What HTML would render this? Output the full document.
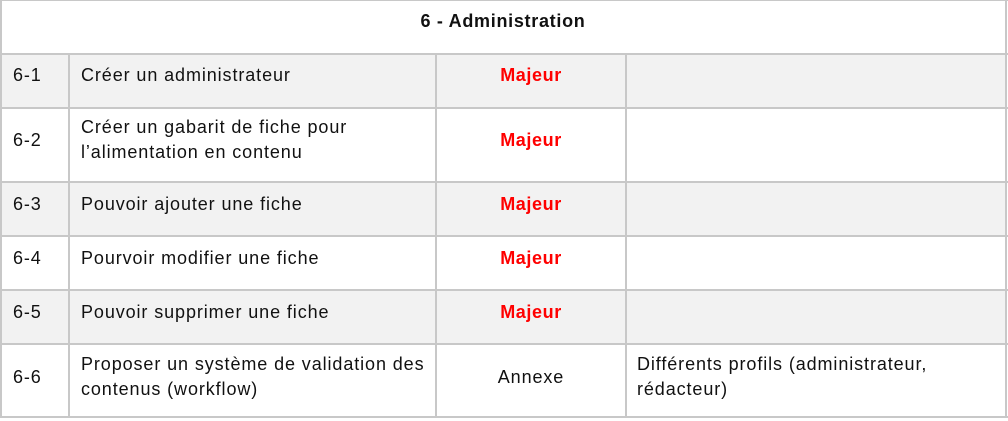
<!DOCTYPE html><html><head><style>
body{margin:0;width:1008px;height:421px;background:#fff;position:relative;font-family:"Liberation Sans",sans-serif;font-size:18px;letter-spacing:0.9px;color:#111;overflow:hidden}
.r{position:absolute;left:0;width:1006px;box-sizing:border-box}
.g{background:#f2f2f2}
.h{position:absolute;background:#c8c8c8;height:2px;left:0;width:1008px}
.v{position:absolute;background:#c8c8c8;width:2px}
.t{position:absolute;line-height:25px;white-space:nowrap}
.m{color:#f00;font-weight:bold;text-align:center;width:190px;left:436px;letter-spacing:0.6px}
</style></head><body>
<div class="r g" style="top:55px;height:53px"></div>
<div class="r g" style="top:183px;height:53px"></div>
<div class="r g" style="top:291px;height:53px"></div>
<div class="h" style="top:0;height:1px"></div>
<div class="h" style="top:53px"></div>
<div class="h" style="top:107px"></div>
<div class="h" style="top:181px"></div>
<div class="h" style="top:235px"></div>
<div class="h" style="top:289px"></div>
<div class="h" style="top:343px"></div>
<div class="h" style="top:416px"></div>
<div class="v" style="left:0;top:0;height:418px"></div>
<div class="v" style="left:1005px;top:0;height:418px"></div>
<div class="v" style="left:68px;top:54px;height:364px"></div>
<div class="v" style="left:435px;top:54px;height:364px"></div>
<div class="v" style="left:625px;top:54px;height:364px"></div>
<div class="t" style="left:0;width:1006px;text-align:center;top:9px;font-weight:bold;font-size:18px;letter-spacing:0.7px">6 - Administration</div>
<div class="t" style="left:13px;top:63px">6-1</div><div class="t" style="left:81px;top:63px">Créer un administrateur</div><div class="t m" style="top:63px">Majeur</div>
<div class="t" style="left:13px;top:128px">6-2</div><div class="t" style="left:81px;top:115px">Créer un gabarit de fiche pour<br>l’alimentation en contenu</div><div class="t m" style="top:128px">Majeur</div>
<div class="t" style="left:13px;top:192px">6-3</div><div class="t" style="left:81px;top:192px">Pouvoir ajouter une fiche</div><div class="t m" style="top:192px">Majeur</div>
<div class="t" style="left:13px;top:246px">6-4</div><div class="t" style="left:81px;top:246px">Pourvoir modifier une fiche</div><div class="t m" style="top:246px">Majeur</div>
<div class="t" style="left:13px;top:300px">6-5</div><div class="t" style="left:81px;top:300px">Pouvoir supprimer une fiche</div><div class="t m" style="top:300px">Majeur</div>
<div class="t" style="left:13px;top:365px">6-6</div><div class="t" style="left:81px;top:352px">Proposer un système de validation des<br>contenus (workflow)</div><div class="t" style="left:436px;width:190px;text-align:center;top:365px">Annexe</div><div class="t" style="left:637px;top:352px">Différents profils (administrateur,<br>rédacteur)</div>
</body></html>
